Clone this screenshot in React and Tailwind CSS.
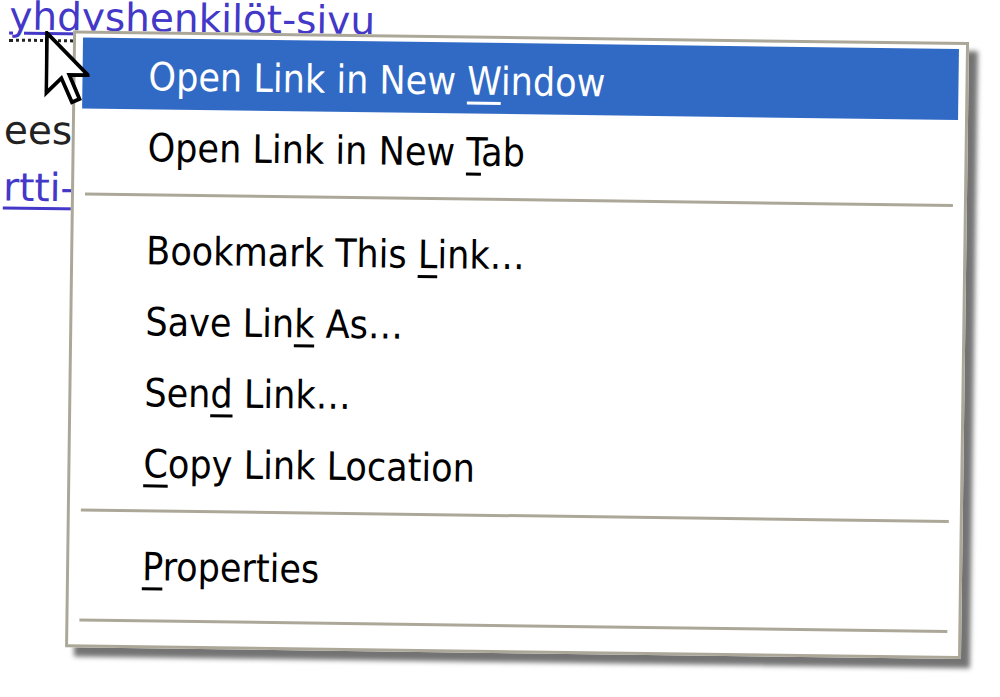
const items = [
  { pre: "Open Link in New ", key: "W", post: "indow", active: true },
  { pre: "Open Link in New ", key: "T", post: "ab" },
  { sep: true },
  { pre: "Bookmark This ", key: "L", post: "ink…" },
  { pre: "Save Lin", key: "k", post: " As…" },
  { pre: "Sen", key: "d", post: " Link…" },
  { pre: "", key: "C", post: "opy Link Location" },
  { sep: true },
  { pre: "", key: "P", post: "roperties" },
];

function Cursor() {
  return (
    <svg
      width="45"
      height="75"
      viewBox="0 0 12 20"
      className="absolute left-[41px] top-[37px] z-20"
    >
      <path
        d="M0.5 0.5 L0.5 16.5 L4.5 12.5 L7.4 18.9 L9.4 18 L6.6 11.6 L11.6 11.6 Z"
        fill="#fff"
        stroke="#000"
        strokeWidth="1"
        strokeLinejoin="miter"
      />
    </svg>
  );
}

function MenuItem({ item }) {
  return (
    <div
      className={
        "flex h-[71px] items-center pl-[66px] pt-[7px] " +
        (item.active ? "bg-[#316ac5] text-white" : "text-black")
      }
    >
      <span className="whitespace-pre">
        {item.pre}
        <span className="underline decoration-3 underline-offset-[7px]">{item.key}</span>
        {item.post}
      </span>
    </div>
  );
}

export default function App() {
  return (
    <div className="relative h-[697px] w-[1000px] overflow-hidden bg-white">
      <div className="relative flow-root h-full w-full rotate-[0.75deg]">
        {/* page text behind the menu */}
        <div className="-mt-[6px] pl-[5px] font-['DejaVu_Sans',sans-serif] text-[39px] leading-[57px]">
          <div className="whitespace-nowrap">
            <span className="border-b-[3px] border-dotted border-[#222] text-[#4338c8] underline decoration-3 underline-offset-[2px]">
              yhdyshenkilöt-sivu
            </span>
          </div>
          <div>&nbsp;</div>
          <div className="-ml-[4px] whitespace-pre text-[#222]">ees  ja muut tiedot</div>
          <div className="-ml-[4px] whitespace-nowrap text-[#4338c8] underline decoration-3 underline-offset-[6px]">
            rtti-sivulta
          </div>
        </div>

        {/* context menu */}
        <div className="absolute left-[69px] top-[36px] z-10 w-[896px] border-[3px] border-[#aca899] bg-white px-[7px] pt-[4px] font-['DejaVu_Sans_Condensed','DejaVu_Sans',sans-serif] text-[39px] font-stretch-condensed shadow-[9px_9px_5px_rgba(0,0,0,0.55)]">
          {items.map((item, i) =>
            item.sep ? (
              <div key={i} className="h-[32px] pt-[13px]">
                <div className="mx-[4px] h-[3px] bg-[#aca899]" />
              </div>
            ) : (
              <MenuItem key={i} item={item} />
            )
          )}
          <div className="pb-[23px] pt-[20px]">
            <div className="mx-[4px] h-[3px] bg-[#aca899]" />
          </div>
        </div>

        <Cursor />
      </div>
    </div>
  );
}
